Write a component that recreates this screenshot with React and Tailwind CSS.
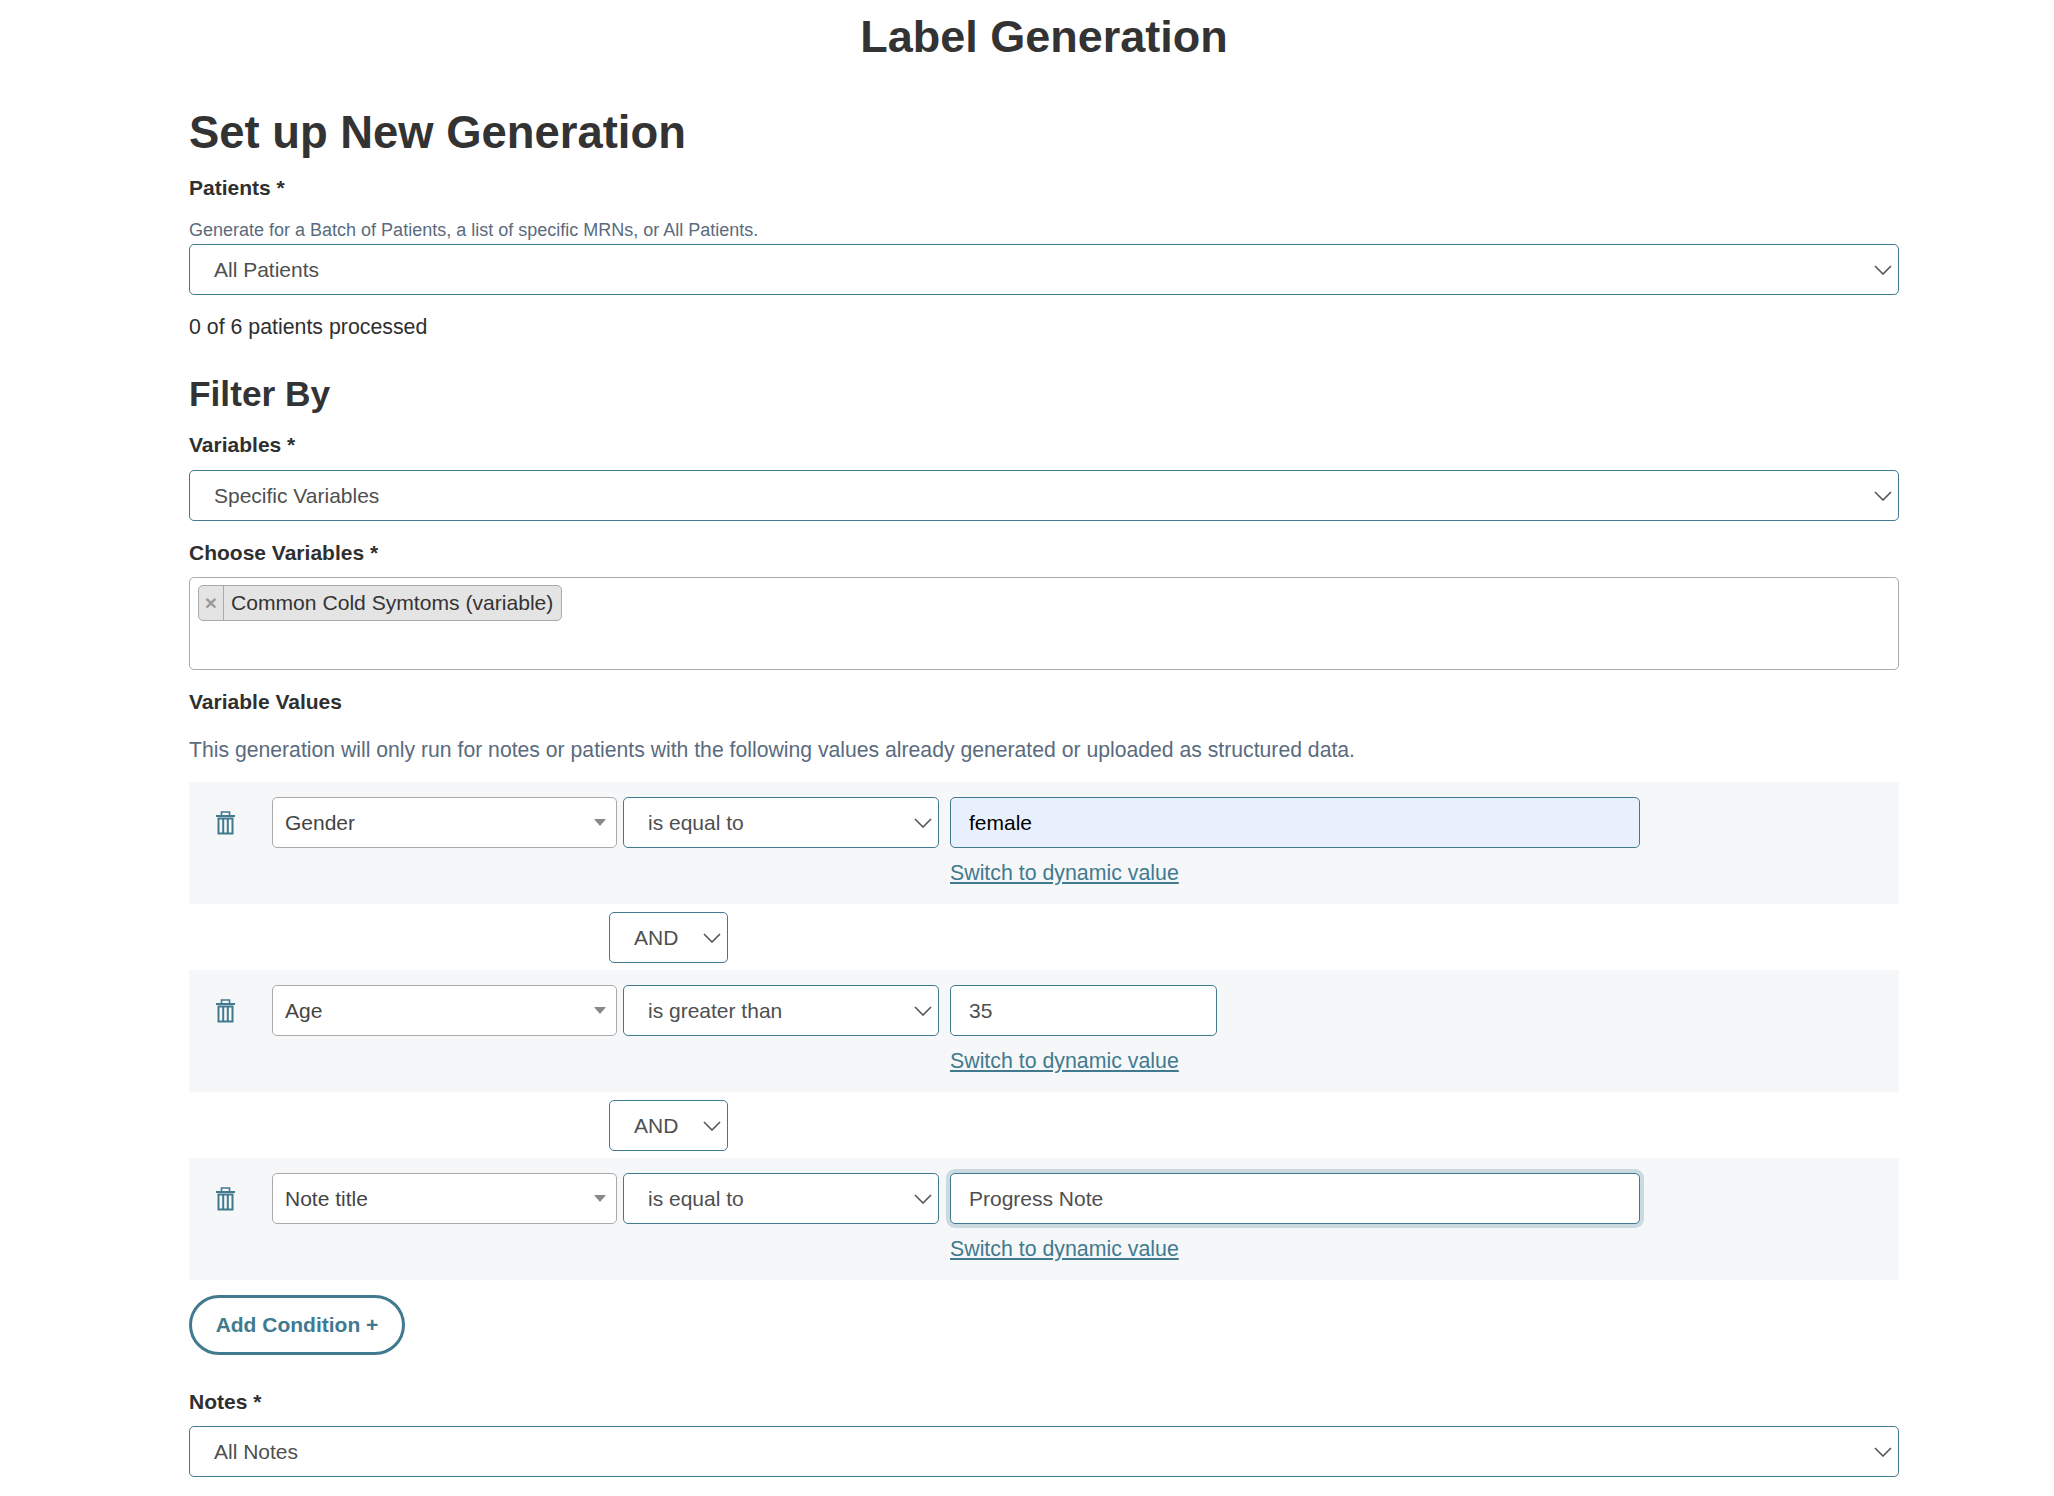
function Chevron() {
  return (
    <svg width="18" height="10" viewBox="0 0 18 10" fill="none">
      <path d="M1 1l8 8 8-8" stroke="#555" strokeWidth="1.6" />
    </svg>
  );
}

function Trash() {
  return (
    <svg width="19" height="24" viewBox="0 0 19 24" fill="none" stroke="#417a8f">
      <path d="M0 5h19" strokeWidth="2" />
      <path d="M5.5 4V1h8v3" strokeWidth="1.6" />
      <path d="M2.5 7.5h14v15h-14z" strokeWidth="2" />
      <path d="M7.2 8v14M11.8 8v14" strokeWidth="2" />
    </svg>
  );
}

function Select({ value, className = "" }) {
  return (
    <div className={`flex h-[51px] items-center justify-between rounded-[5px] border border-[#417a8f] bg-white pl-[24px] pr-[6px] text-[#4f4f4f] ${className}`}>
      <span>{value}</span>
      <Chevron />
    </div>
  );
}

function VarSelect({ value }) {
  return (
    <div className="flex h-[51px] w-[345px] items-center justify-between rounded-[5px] border border-[#aaaaaa] bg-white pl-[12px] pr-[10px] text-[#444444]">
      <span>{value}</span>
      <span className="h-0 w-0 border-x-[6px] border-t-[7px] border-x-transparent border-t-[#888888]" />
    </div>
  );
}

function Label({ children, className = "" }) {
  return <div className={`font-bold text-[#2f2f2f] ${className}`}>{children}</div>;
}

function ValueInput({ value, className = "" }) {
  return (
    <input
      readOnly
      value={value}
      className={`h-[51px] rounded-[5px] border border-[#417a8f] px-[18px] outline-none ${className}`}
    />
  );
}

function ConditionRow({ field, op, input }) {
  return (
    <div className="flex h-[122px] bg-[#f6f7f9] pl-[27px] pt-[15px]">
      <div className="w-[56px] pt-[14px]">
        <Trash />
      </div>
      <VarSelect value={field} />
      <Select value={op} className="ml-[6px] w-[316px]" />
      <div className="ml-[11px] flex flex-col items-start">
        {input}
        <a className="mt-[10px] text-[21.33px] text-[#417a8f] underline">Switch to dynamic value</a>
      </div>
    </div>
  );
}

function AndSelect() {
  return (
    <div className="flex pb-[7px] pl-[420px] pt-[8px]">
      <Select value="AND" className="w-[119px]" />
    </div>
  );
}

export default function App() {
  return (
    <div className="h-[1496px] overflow-hidden bg-white pl-[189px] pr-[155px] text-[21px] leading-[30px] text-[#2f2f2f] [font-family:'Liberation_Sans',Arial,sans-serif]">
      <h1 className="pt-[13px] text-center text-[45px] leading-[48px] font-bold text-[#333333]">Label Generation</h1>
      <h2 className="mt-[48px] text-[45.4px] leading-[48px] font-bold text-[#333333]">Set up New Generation</h2>
      <Label className="mt-[16px]">Patients *</Label>
      <div className="mb-[2px] mt-[15px] text-[18px] leading-[24px] text-[#5a6b7e]">
        Generate for a Batch of Patients, a list of specific MRNs, or All Patients.
      </div>
      <Select value="All Patients" />
      <div className="mt-[17px] text-[21.33px]">0 of 6 patients processed</div>
      <h3 className="mt-[31px] text-[35.3px] leading-[42px] font-bold text-[#333333]">Filter By</h3>
      <Label className="mt-[15px]">Variables *</Label>
      <Select value="Specific Variables" className="mt-[10px]" />
      <Label className="mt-[17px]">Choose Variables *</Label>
      <div className="mt-[9px] h-[93px] rounded-[5px] border border-[#aaaaaa] px-[8px] pt-[7px]">
        <div className="inline-flex h-[36px] items-center rounded-[5px] border border-[#aaaaaa] bg-[#e4e4e4]">
          <span className="flex h-full w-[25px] items-center justify-center border-r border-[#aaaaaa] text-[21px] font-bold text-[#999999]">×</span>
          <span className="pl-[7px] pr-[8px] text-[21.1px] text-[#333333]">Common Cold Symtoms (variable)</span>
        </div>
      </div>
      <Label className="mt-[17px]">Variable Values</Label>
      <div className="mt-[18px] text-[21.2px] text-[#5a6b7e]">
        This generation will only run for notes or patients with the following values already generated or uploaded as structured data.
      </div>
      <div className="mt-[17px]">
        <ConditionRow field="Gender" op="is equal to" input={<ValueInput value="female" className="w-[690px] bg-[#e8f0fe] text-black" />} />
        <AndSelect />
        <ConditionRow field="Age" op="is greater than" input={<ValueInput value="35" className="w-[267px] bg-white text-[#4f4f4f]" />} />
        <AndSelect />
        <ConditionRow field="Note title" op="is equal to" input={<ValueInput value="Progress Note" className="w-[690px] bg-white text-[#4f4f4f] shadow-[0_0_0_4px_#cbd9e0]" />} />
      </div>
      <button className="mt-[15px] h-[60px] w-[216px] rounded-[30px] border-[3px] border-[#417a8f] font-bold text-[#417a8f]">Add Condition +</button>
      <Label className="mt-[32px]">Notes *</Label>
      <Select value="All Notes" className="mt-[9px]" />
    </div>
  );
}
